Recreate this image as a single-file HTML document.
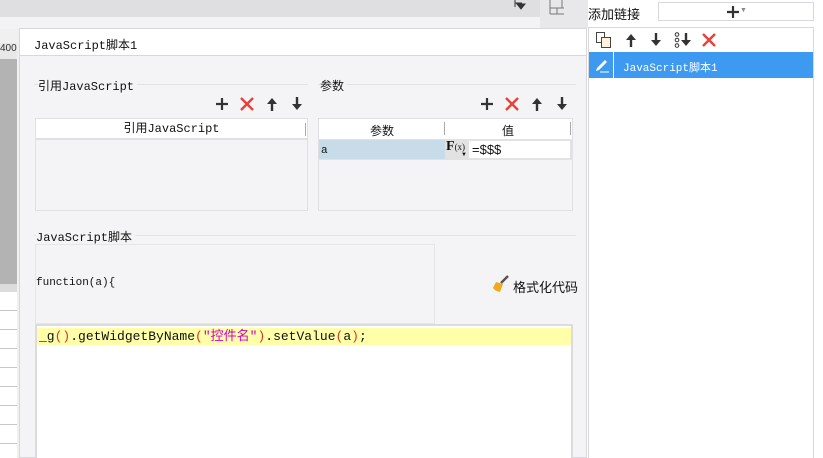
<!DOCTYPE html>
<html><head><meta charset="utf-8"><style>
*{margin:0;padding:0;box-sizing:border-box}
body{width:823px;height:458px;overflow:hidden;background:#fff;position:relative;font-family:"Liberation Sans","Noto Sans CJK SC",sans-serif;font-size:12px;color:#111}
.a{position:absolute}
.mono{font-family:"Liberation Mono","Noto Sans CJK SC",monospace}
svg.a{overflow:visible}
</style></head><body>
<svg width="0" height="0" style="position:absolute"><defs>
<g id="plus"><path d="M1 7H13M7 1V13" stroke="#333" stroke-width="2.2"/></g>
<g id="x"><path d="M1 1L13 13M13 1L1 13" stroke="#e8403a" stroke-width="2.4"/></g>
<g id="up"><path d="M6 14V5" stroke="#333" stroke-width="2.4"/><path d="M1 7L6 1L11 7Z" fill="#333"/></g>
<g id="dn"><path d="M6 0V9" stroke="#333" stroke-width="2.4"/><path d="M1 7L6 13L11 7Z" fill="#333"/></g>
</defs></svg>
<!-- top bar -->
<div class="a" style="left:0;top:0;width:540px;height:17px;background:#dfdfe1"></div>
<div class="a" style="left:0;top:17px;width:540px;height:12px;background:#f3f3f5"></div>
<div class="a" style="left:540px;top:0;width:48px;height:28px;background:#e8e8ea"></div>
<svg class="a" style="left:514px;top:0" width="12" height="10"><path d="M1 0V7M1 3H8M3 4L11 4L7 9Z" stroke="#333" fill="#333"/></svg>
<svg class="a" style="left:548px;top:0" width="18" height="16"><path d="M2 0V14M2 8H16M2 14H16M9 8V14M14 0V8" stroke="#777" fill="none"/></svg>
<!-- left strip -->
<div class="a" style="left:0;top:29px;width:19px;height:429px;background:#f0f0f0"></div>
<div class="a" style="left:0;top:43px;width:17px;height:16px;background:#e8e8e8;font-size:10px;color:#333">400</div>
<div class="a" style="left:0;top:59px;width:17px;height:225px;background:#b3b3b3"></div>
<div class="a" style="left:0;top:284px;width:17px;height:8px;background:#dcdcdc"></div>
<div class="a" style="left:0;top:292px;width:17px;height:166px;background:repeating-linear-gradient(#fff 0 18px,#c8c8c8 18px 19px)"></div>
<!-- dialog -->
<div class="a" style="left:19px;top:28px;width:568px;height:430px;background:#f4f4f6;border:1px solid #d8d8dc"></div>
<div class="a" style="left:20px;top:29px;width:566px;height:27px;background:#fff;border-bottom:1px solid #d8d8dc"></div>
<div class="a mono" style="left:34px;top:36px;font-size:12px">JavaScript脚本1</div>
<!-- section 1 -->
<div class="a" style="left:34px;top:84px;width:274px;border-top:1px solid #e2e2e6"></div>
<div class="a mono" style="left:38px;top:77px;background:#f4f4f6;padding-right:3px">引用JavaScript</div>
<div class="a" style="left:318px;top:84px;width:258px;border-top:1px solid #e2e2e6"></div>
<div class="a" style="left:320px;top:77px;background:#f4f4f6;padding-right:3px">参数</div>
<svg class="a" style="left:215px;top:97px" width="14" height="14"><use href="#plus"/></svg>
<svg class="a" style="left:240px;top:97px" width="14" height="14"><use href="#x"/></svg>
<svg class="a" style="left:266px;top:97px" width="12" height="14"><use href="#up"/></svg>
<svg class="a" style="left:291px;top:97px" width="12" height="14"><use href="#dn"/></svg>
<svg class="a" style="left:480px;top:97px" width="14" height="14"><use href="#plus"/></svg>
<svg class="a" style="left:505px;top:97px" width="14" height="14"><use href="#x"/></svg>
<svg class="a" style="left:531px;top:97px" width="12" height="14"><use href="#up"/></svg>
<svg class="a" style="left:556px;top:97px" width="12" height="14"><use href="#dn"/></svg>
<!-- table1 -->
<div class="a" style="left:35px;top:118px;width:273px;height:93px;border:1px solid #e0e0e4"></div>
<div class="a mono" style="left:36px;top:119px;width:271px;height:21px;background:#fff;border-bottom:2px solid #e0e0e0;text-align:center;line-height:20px">引用JavaScript</div>
<div class="a" style="left:305px;top:123px;width:1px;height:13px;background:#aaa"></div>
<!-- table2 -->
<div class="a" style="left:318px;top:118px;width:255px;height:93px;border:1px solid #e0e0e4"></div>
<div class="a" style="left:319px;top:119px;width:253px;height:20px;background:#fff"></div>
<div class="a" style="left:319px;top:122px;width:126px;text-align:center">参数</div>
<div class="a" style="left:445px;top:122px;width:126px;text-align:center">值</div>
<div class="a" style="left:444px;top:122px;width:1px;height:13px;background:#aaa"></div>
<div class="a" style="left:570px;top:122px;width:1px;height:13px;background:#aaa"></div>
<div class="a" style="left:319px;top:139px;width:253px;height:21px;background:#e2e2e2"></div>
<div class="a mono" style="left:319px;top:140px;width:126px;height:19px;background:#c7dbe8;font-size:11px;padding-left:2px;line-height:22px">a</div>
<div class="a" style="left:446px;top:139px;font-family:'Liberation Serif',serif;font-size:14px;font-weight:bold">F<span style="font-size:9px;font-weight:normal">(x)</span></div>
<div class="a" style="left:461px;top:152px;font-size:6px">▼</div>
<div class="a" style="left:469px;top:141px;width:101px;height:17px;background:#fff;padding-left:3px;line-height:17px;font-size:13px">=$$$</div>
<!-- section 2 -->
<div class="a" style="left:34px;top:235px;width:542px;border-top:1px solid #e2e2e6"></div>
<div class="a mono" style="left:36px;top:228px;background:#f4f4f6;padding-right:3px">JavaScript脚本</div>
<div class="a" style="left:35px;top:244px;width:400px;height:80px;border:1px solid #e6e6ea"></div>
<div class="a mono" style="left:36px;top:277px;font-size:11px">function(a){</div>
<svg class="a" style="left:492px;top:276px" width="18" height="18"><path d="M9 7L16 0" stroke="#555" stroke-width="2.5"/><path d="M4 6L11 8L8 16Q3 15 1 12Z" fill="#f0a820"/></svg>
<div class="a" style="left:513px;top:277px;font-size:13px">格式化代码</div>
<div class="a" style="left:35px;top:324px;width:538px;height:134px;background:#fff;border:2px solid #dcdcdc;border-bottom:none"></div>
<div class="a mono" style="left:37px;top:328px;width:534px;height:17px;background:#ffffaa;font-size:13px;line-height:17px;padding-left:2px">_g<span style="color:#e03030">()</span>.getWidgetByName<span style="color:#e03030">(</span><span style="color:#d000c0">"控件名"</span><span style="color:#e03030">)</span>.setValue<span style="color:#e03030">(</span>a<span style="color:#e03030">)</span>;</div>
<!-- right panel -->
<div class="a" style="left:588px;top:4px;font-size:13px">添加链接</div>
<div class="a" style="left:658px;top:2px;width:156px;height:19px;border:1px solid #d8d8dc"></div>
<svg class="a" style="left:726px;top:5px" width="14" height="14"><use href="#plus"/></svg>
<div class="a" style="left:740px;top:7px;font-size:7px;color:#888">▼</div>
<div class="a" style="left:588px;top:27px;width:226px;height:431px;border:1px solid #d8d8dc;border-bottom:none"></div>
<div class="a" style="left:596px;top:32px;width:9px;height:11px;border:1px solid #444;background:#fff"></div>
<div class="a" style="left:601px;top:37px;width:10px;height:11px;border:1px solid #444;background:#fdf3dc"></div>
<svg class="a" style="left:625px;top:33px" width="12" height="14"><use href="#up"/></svg>
<svg class="a" style="left:650px;top:33px" width="12" height="14"><use href="#dn"/></svg>
<svg class="a" style="left:674px;top:32px" width="18" height="16"><circle cx="3" cy="2.5" r="1.8" fill="none" stroke="#333"/><circle cx="3" cy="8" r="1.8" fill="none" stroke="#333"/><circle cx="3" cy="13.5" r="1.8" fill="none" stroke="#333"/><g transform="translate(6,1)"><use href="#dn"/></g></svg>
<svg class="a" style="left:702px;top:33px" width="14" height="14"><use href="#x"/></svg>
<div class="a" style="left:589px;top:52px;width:224px;height:26px;background:#3d9af0"></div>
<div class="a" style="left:613px;top:52px;width:1px;height:26px;background:#fff"></div>
<svg class="a" style="left:594px;top:57px" width="16" height="16"><path d="M3 11L11 3L13 5L5 13L2 14Z" fill="#fff"/><path d="M6 15H15" stroke="#fff"/></svg>
<div class="a mono" style="left:623px;top:59px;color:#fff;font-size:11px">JavaScript脚本1</div>
</body></html>
